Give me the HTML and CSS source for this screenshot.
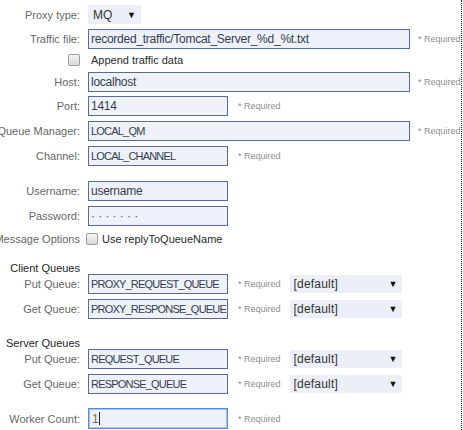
FILE: index.html
```html
<!DOCTYPE html>
<html>
<head>
<meta charset="utf-8">
<link rel="stylesheet" href="styles.css">
</head>
<body>
<div class="frame">
  <form class="form">
    <div class="row r-proxy">
      <label class="lbl">Proxy type:</label>
      <span class="sel sel-proxy"><select><option>MQ</option></select></span>
    </div>
    <div class="row r-traffic">
      <label class="lbl">Traffic file:</label>
      <input class="inp wide" type="text" value="recorded_traffic/Tomcat_Server_%d_%t.txt">
      <span class="req req-wide">* Required</span>
    </div>
    <div class="row r-append">
      <span class="lbl"><span class="cb"></span></span>
      <span class="cbtext">Append traffic data</span>
    </div>
    <div class="row r-host">
      <label class="lbl">Host:</label>
      <input class="inp wide" type="text" value="localhost">
      <span class="req req-wide">* Required</span>
    </div>
    <div class="row r-port">
      <label class="lbl">Port:</label>
      <input class="inp narrow" type="text" value="1414">
      <span class="req">* Required</span>
    </div>
    <div class="row r-std">
      <label class="lbl">Queue Manager:</label>
      <input class="inp wide caps" type="text" value="LOCAL_QM">
      <span class="req req-wide">* Required</span>
    </div>
    <div class="row r-std">
      <label class="lbl">Channel:</label>
      <input class="inp narrow caps" type="text" value="LOCAL_CHANNEL">
      <span class="req">* Required</span>
    </div>
    <div class="row r-user">
      <label class="lbl">Username:</label>
      <input class="inp narrow" type="text" value="username">
    </div>
    <div class="row r-std">
      <label class="lbl">Password:</label>
      <input class="inp narrow pw" type="text" value="·······">
    </div>
    <div class="row r-msg">
      <label class="lbl">Message Options</label>
      <span class="cb cb-msg"></span>
      <span class="cbtext2">Use replyToQueueName</span>
    </div>
    <div class="row r-head1">
      <span class="lbl head">Client Queues</span>
    </div>
    <div class="row r-q0">
      <label class="lbl">Put Queue:</label>
      <input class="inp narrow caps" type="text" value="PROXY_REQUEST_QUEUE">
      <span class="req">* Required</span>
      <span class="sel sel-q"><select><option>[default]</option></select></span>
    </div>
    <div class="row r-std">
      <label class="lbl">Get Queue:</label>
      <input class="inp narrow caps" type="text" value="PROXY_RESPONSE_QUEUE">
      <span class="req">* Required</span>
      <span class="sel sel-q"><select><option>[default]</option></select></span>
    </div>
    <div class="row r-head2">
      <span class="lbl head">Server Queues</span>
    </div>
    <div class="row r-q0">
      <label class="lbl">Put Queue:</label>
      <input class="inp narrow caps" type="text" value="REQUEST_QUEUE">
      <span class="req">* Required</span>
      <span class="sel sel-q"><select><option>[default]</option></select></span>
    </div>
    <div class="row r-std">
      <label class="lbl">Get Queue:</label>
      <input class="inp narrow caps" type="text" value="RESPONSE_QUEUE">
      <span class="req">* Required</span>
      <span class="sel sel-q"><select><option>[default]</option></select></span>
    </div>
    <div class="row r-worker">
      <label class="lbl">Worker Count:</label>
      <span class="caretwrap"><input class="inp narrow focus" type="text" value="1"></span>
      <span class="req">* Required</span>
    </div>
  </form>
</div>
</body>
</html>
```
FILE: styles.css
```css
html, body {
  margin: 0;
  padding: 0;
  background: #ffffff;
}
body {
  font-family: "Liberation Sans", Arial, sans-serif;
  overflow: hidden;
}
.frame {
  width: 461px;
  height: 430px;
  border-right: 1px dotted #222;
}
.form {
  display: flex;
  flex-direction: column;
  padding-top: 5px;
}
.row {
  display: flex;
  align-items: center;
  height: 20px;
}
.r-proxy { height: 19px; margin-top: 0; }
.r-traffic { margin-top: 5px; }
.r-append { margin-top: 4px; height: 13px; }
.r-host { margin-top: 6px; }
.r-port { margin-top: 4px; }
.r-std { margin-top: 5px; }
.r-user { margin-top: 15px; }
.r-msg { margin-top: 6px; height: 13px; }
.r-head1 { margin-top: 17px; height: 12px; }
.r-head2 { margin-top: 18px; height: 12px; }
.r-q0 { margin-top: 0; }
.r-worker { margin-top: 14px; height: 21px; }

.lbl {
  flex: none;
  width: 80px;
  display: flex;
  justify-content: flex-end;
  align-items: center;
  white-space: nowrap;
  font-size: 11px;
  color: #676767;
  margin-right: 8px;
}
.head {
  color: #1e1e1e;
}
.inp {
  box-sizing: border-box;
  height: 100%;
  border: 1px solid #5b6b8c;
  background: #eef1f8;
  padding: 0 0 0 2px;
  margin: 0;
  font-family: "Liberation Sans", Arial, sans-serif;
  font-size: 12px;
  letter-spacing: -0.25px;
  color: #353e50;
  outline: none;
  border-radius: 0;
}
.caps {
  font-size: 11px;
  letter-spacing: -0.8px;
}
.wide { width: 322px; }
.narrow { width: 140px; }
.pw { letter-spacing: 3.2px; color: #4a5368; }
.focus {
  border: 1px solid #5a8ad8;
  box-shadow: inset 0 0 0 1px #a9c2ee;
  color: #7a6a30;
  padding-left: 3px;
}
.caretwrap {
  position: relative;
  display: block;
  height: 100%;
  flex: none;
}
.caretwrap::after {
  content: "";
  position: absolute;
  left: 11px;
  top: 4px;
  width: 1px;
  height: 13px;
  background: #222;
}
.req {
  flex: none;
  font-size: 9px;
  color: #8a8d93;
  margin-left: 10px;
  white-space: nowrap;
}
.req-wide { margin-left: 8px; }

.sel {
  position: relative;
  display: inline-block;
  flex: none;
}
.sel select {
  appearance: none;
  -webkit-appearance: none;
  border: none;
  border-radius: 0;
  outline: none;
  background: #eceff7;
  font-family: "Liberation Sans", Arial, sans-serif;
  font-size: 12px;
  color: #333;
  margin: 0;
  display: block;
}
.sel::after {
  content: "▼";
  position: absolute;
  top: 50%;
  transform: translateY(-50%);
  font-size: 9px;
  color: #111;
  pointer-events: none;
}
.sel-proxy select {
  width: 53px;
  height: 19px;
  padding: 0 0 0 5px;
}
.sel-proxy::after { left: 39px; }
.sel-q {
  margin-left: 9px;
}
.sel-q select {
  width: 112px;
  height: 18px;
  padding: 0 0 0 4px;
  letter-spacing: 0.2px;
}
.sel-q::after { left: 99px; }

.cb {
  display: inline-block;
  box-sizing: border-box;
  width: 12px;
  height: 12px;
  border: 1px solid #9d9d9d;
  border-radius: 2px;
  background: linear-gradient(#f4f4f4, #d8d8d8);
}
.cbtext {
  font-size: 11px;
  color: #2a2a2a;
  margin-left: 3px;
}
.cb-msg {
  margin-left: -2px;
}
.cbtext2 {
  font-size: 11px;
  color: #2a2a2a;
  margin-left: 4px;
}
```
